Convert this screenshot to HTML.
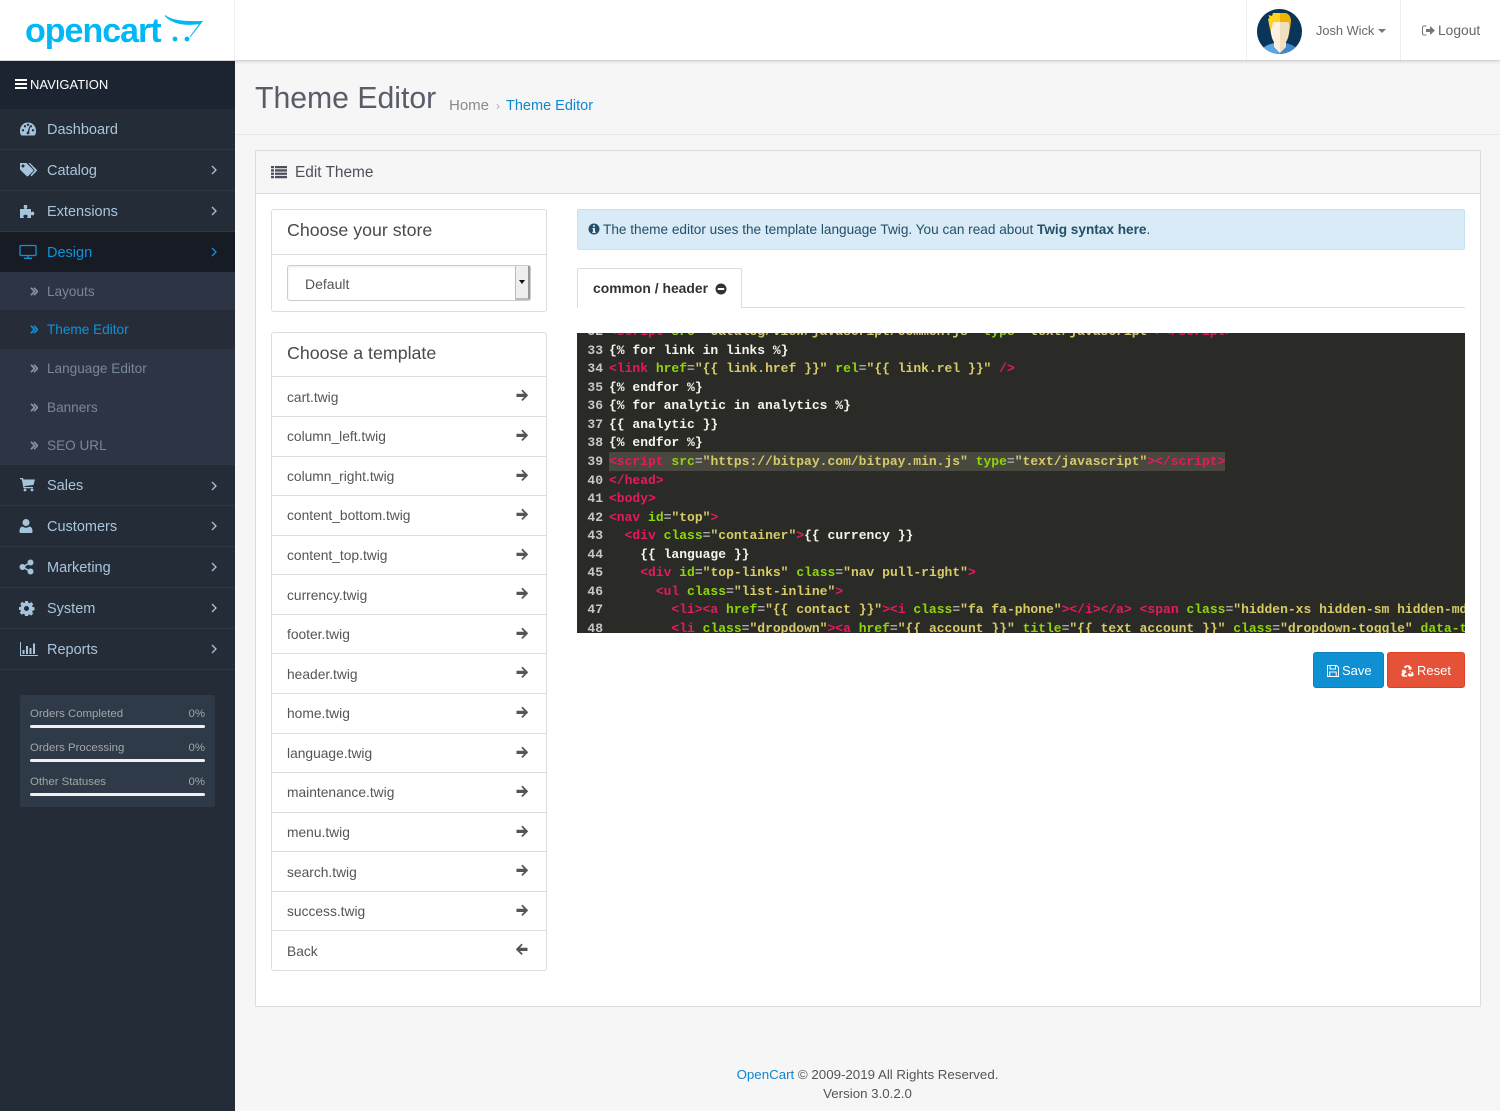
<!DOCTYPE html>
<html lang="en"><head><meta charset="utf-8"><title>Theme Editor</title>
<style>
*{box-sizing:border-box}
html,body{margin:0;padding:0;width:1500px;height:1111px;overflow:hidden;background:#f6f6f6;font-family:"Liberation Sans",sans-serif;color:#555}
a{text-decoration:none;color:inherit}
.abs,header,nav,nav *,.sp{position:absolute}
header{left:0;top:0;width:1500px;height:61px;background:#fff;border-bottom:1px solid #d4d4d4;box-shadow:0 1px 3px rgba(0,0,0,.12);z-index:3}
.vl{position:absolute;top:0;width:1px;height:60px;background:#eee}
.logo{position:absolute;left:25px;top:9px;font:bold 34px/44px "Liberation Sans",sans-serif;letter-spacing:-1px;color:#00b8f5}
nav{left:0;top:61px;width:235px;height:1050px;background:#242c37}
.navh{left:0;top:0;width:235px;height:48px;background:#1b2430;color:#fff;font-size:13px;line-height:47px;padding-left:30px}
.it{left:0;width:235px;height:41px;border-bottom:1px solid #2e3743;color:#a9c5dc;font-size:14.5px;line-height:43px;padding-left:47px}
.it svg{left:19px;top:12px;fill:#a5c4dc}
.it .ch{left:211px;top:15px;fill:none;stroke:#a5c4dc;stroke-width:1.3}
.it.on{background:#171b24;color:#0f93dc;border-color:#171b24}
.it.on svg{fill:none;stroke:#0f93dc}
.sub{left:0;width:235px;background:#2d3545;color:#78879a;font-size:13.6px;padding-left:47px}
.sub svg{left:30px;fill:none;stroke:#8a97a7;stroke-width:1.6}
.sub.act{background:#262d38;color:#0f93dc}
.sub.act svg{stroke:#0f93dc}
.stats{left:20px;top:634px;width:195px;height:112px;background:#2e3a47;border-radius:2px}
.lb{left:10px;font-size:11.4px;color:#a3a6a8;white-space:nowrap}
.pc{right:10px;font-size:11.4px;color:#a3a6a8}
.bar{left:10px;width:175px;height:3px;background:#f0f0f0;border-radius:2px}
h1{position:absolute;left:255px;top:79px;margin:0;font-size:30.2px;line-height:40px;font-weight:400;color:#5a5d69}
.bc{position:absolute;top:97px;font-size:14.5px;line-height:18px;white-space:nowrap}
.rule{position:absolute;left:235px;top:134px;width:1265px;height:1px;background:#e6e6e6}
.panel{position:absolute;left:255px;top:150px;width:1226px;height:857px;background:#fff;border:1px solid #ddd}
.ph{position:absolute;left:255px;top:150px;width:1226px;height:44px;background:#f6f6f6;border:1px solid #ddd;color:#4c4f5c;font-size:15.4px;line-height:43px;padding-left:39px}
.box{position:absolute;left:271px;width:276px;background:#fff;border:1px solid #ddd;border-radius:3px}
.t18{position:absolute;left:15px;font-size:17.8px;line-height:24px;color:#4a4a4a;white-space:nowrap}
.hr{position:absolute;left:0;width:100%;height:1px;background:#ddd}
.sel{position:absolute;left:287px;top:265px;width:244px;height:36px;border:1px solid #ccc;border-radius:3px;background:#fff;font-size:14px;line-height:37px;padding-left:17px;color:#555;box-shadow:inset 0 1px 2px rgba(0,0,0,.08)}
.sel i{position:absolute;right:0;top:0;width:15px;height:34px;background:#eee;border-left:1px solid #bbb;border-right:2px solid #999;border-bottom:2px solid #bbb}
.sel i:after{content:"";position:absolute;left:3px;top:14px;border:3px solid transparent;border-top:4px solid #111;border-bottom:0}
.row{position:absolute;left:271px;width:276px;height:40px;border-top:1px solid #ddd;font-size:13.8px;line-height:40px;padding-left:16px;color:#555}
.row.r1{line-height:42px}
.row svg{position:absolute;left:245px;top:12px;fill:#555}
.alert{position:absolute;left:577px;top:209px;width:888px;height:41px;background:#d8ebf6;border:1px solid #c3e3f1;border-radius:2px;font-size:13.62px;line-height:39px;padding-left:25px;color:#234f68;white-space:nowrap}
.alert svg{position:absolute;left:10px;top:13px;fill:#234f68}
.tabr{position:absolute;left:577px;top:307px;width:888px;height:1px;background:#ddd}
.tab{position:absolute;left:577px;top:268px;width:165px;height:40px;background:#fff;border:1px solid #ddd;border-bottom:0;border-radius:2px 2px 0 0;font-size:13.9px;font-weight:700;line-height:39px;padding-left:15px;color:#333}
.tab svg{position:absolute;left:137px;top:14px;fill:#333}
.code{position:absolute;left:577px;top:333px;width:888px;height:300px;background:#2a2b26;overflow:hidden;font:bold 13px/18.57px "Liberation Mono",monospace;color:#f4f4ee}
.lnw{position:absolute;left:0;top:-10px;width:26px;text-align:right;color:#c8c8c8;font-weight:700}
.cw{position:absolute;left:32px;top:-10px;width:1200px}
.lnw div,.cw div{height:18.57px}
.cw div{white-space:pre}
.selbg{position:absolute;left:32px;top:119px;width:616px;height:19px;background:#49483e}
.g{color:#e6195f}.a{color:#8fd60a}.s{color:#d8cb68}.e{color:#a8a8a8}
.btn{position:absolute;top:652px;height:36px;border-radius:3px;color:#fff;font-size:13px;font-weight:400;line-height:35px}
.btn svg{position:absolute;left:13px;top:12px}
.foot{position:absolute;left:235px;width:1265px;text-align:center;font-size:13.3px;line-height:19px;color:#555}
</style></head><body>
<header>
<div class="vl" style="left:234px"></div><div class="vl" style="left:1246px"></div><div class="vl" style="left:1400px"></div>
<a class="logo">opencart</a>
<svg class="abs" style="left:164px;top:14px" width="40" height="32" viewBox="0 0 40 32"><path d="M1 1.500C8 7 20 8 38 7.500L26 23l10-13.500C20 12 7 9 1 1.500Z" fill="#00b8f5" stroke="#00b8f5" stroke-width="1"/><circle cx="11" cy="25" r="2.400" fill="#00b8f5"/><circle cx="23" cy="25" r="2.400" fill="#00b8f5"/></svg>
<svg class="abs" style="left:1257px;top:9px" width="45" height="45" viewBox="0 0 45 45"><defs><clipPath id="c"><circle cx="22.500" cy="22.500" r="22.500"/></clipPath></defs><g clip-path="url(#c)"><rect width="45" height="45" fill="#0b3557"/><path d="M3 45C4 38 10 36 17 34L23 41V45Z" fill="#5aa7e8"/><path d="M23 45V41L29 34C36 36 41 38 42 45Z" fill="#3f86cc"/><path d="M13 11H23V44L17 38V33C14 29 13 20 13 11Z" fill="#fdf0dd"/><path d="M23 11H33C33 20 32 29 29 33V38L23 44Z" fill="#f2dfbe"/><path d="M13 20L11 10L12.500 9L11.500 6L15 7L16 4H23V13H16L14.500 20Z" fill="#ffd21f"/><path d="M23 4H29C32 5 34 8 34 12L33 20L31.500 13H23Z" fill="#eeb400"/></g></svg>
<span class="abs" style="left:1316px;top:22px;font-size:12.8px;line-height:18px;color:#666;white-space:nowrap">Josh Wick</span>
<span class="abs" style="left:1378px;top:29px;border:4px solid transparent;border-top-color:#777;border-bottom:0"></span>
<svg class="abs" style="left:1422px;top:25px" width="13" height="11" viewBox="0 0 13 11"><path d="M4.500 1H2a1.500 1.500 0 0 0-1.500 1.500v6A1.500 1.500 0 0 0 2 10h2.500" fill="none" stroke="#777" stroke-width="1"/><path d="M4 4h4V1l5 4.500L8 10V7H4Z" fill="#777"/></svg>
<span class="abs" style="left:1438px;top:22px;font-size:13.800px;line-height:18px;color:#666">Logout</span>
</header>
<nav>
<div class="navh"><svg class="abs" style="left:15px;top:18px" width="12" height="11" viewBox="0 0 12 11" fill="#fff"><rect width="12" height="2"/><rect y="4" width="12" height="2"/><rect y="8" width="12" height="2"/></svg>NAVIGATION</div>
<a class="it" style="top:48px"><svg width="18" height="16" viewBox="0 0 18 16"><path fill-rule="evenodd" d="M9 1.500C4 1.500 1 5.500 1 10c0 1.500.3 3 1 4 .2.300.5.500 1 .500h12c.5 0 .8-.2 1-.5.7-1 1-2.500 1-4 0-4.500-3-8.500-8-8.500ZM4 10.500a1.200 1.200 0 1 1 0-2.400 1.200 1.200 0 0 1 0 2.400Zm2-4a1.200 1.200 0 1 1 0-2.400 1.200 1.200 0 0 1 0 2.400Zm3-1.500a1.200 1.200 0 1 1 0-2.400 1.200 1.200 0 0 1 0 2.400Zm1.500 7.500a1.700 1.700 0 0 1-3 0c0-.8.500-1.400 1-1.600L10.500 5l.8.300-1.200 5.800c.3.300.4.800.4 1.400ZM12 6.500a1.200 1.200 0 1 1 0-2.400 1.200 1.200 0 0 1 0 2.400Zm2 4a1.200 1.200 0 1 1 0-2.400 1.200 1.200 0 0 1 0 2.400Z"/></svg>Dashboard</a>
<a class="it" style="top:89px"><svg width="18" height="16" viewBox="0 0 18 16"><path fill-rule="evenodd" d="M1 1h6.500L14 7.500a1.200 1.200 0 0 1 0 1.700L9.200 14a1.200 1.200 0 0 1-1.700 0L1 7.500ZM4 5.500a1.500 1.500 0 1 0 0-3 1.500 1.500 0 0 0 0 3Z"/><path d="M9.500 1h1.500L17.500 7.500a1.200 1.200 0 0 1 0 1.700L12.500 14.300l-1-1L15.700 8.400Z"/></svg>Catalog<svg class="ch" width="6" height="10" viewBox="0 0 6 10"><path d="M1 1l4 4-4 4"/></svg></a>
<a class="it" style="top:130px"><svg width="18" height="16" viewBox="0 0 18 16"><path d="M1 6h4.500C5 4.500 4.500 4 4.700 3 5 1.500 8 1.500 8.300 3c.2 1-.3 1.500-.8 3H12v3.300c1.200-.8 1.800-.8 2.500-.5 1 .5 1 2.900 0 3.400-.7.300-1.300.3-2.500-.5V15H8c.3-1 1-1.700.5-2.500-.5-1-3.500-1-4 0-.4.800.2 1.500.5 2.500H1Z"/></svg>Extensions<svg class="ch" width="6" height="10" viewBox="0 0 6 10"><path d="M1 1l4 4-4 4"/></svg></a>
<a class="it on" style="top:171px;height:40px"><svg width="18" height="16" viewBox="0 0 18 16" stroke-width="1.300"><rect x="1" y="1.500" width="16" height="10" rx="1"/><path d="M9 11.500v2.500M5 14.300h8"/></svg>Design<svg class="ch" style="stroke:#0f93dc;stroke-width:1.300" width="6" height="10" viewBox="0 0 6 10"><path d="M1 1l4 4-4 4"/></svg></a>
<a class="sub" style="top:211px;height:38px;line-height:40px"><svg style="top:15px" width="8" height="9" viewBox="0 0 8 9"><path d="M1 .8l3.500 3.700L1 8.200M4 .8l3.500 3.700L4 8.200"/></svg>Layouts</a>
<a class="sub act" style="top:249px;height:39px;line-height:39px"><svg style="top:15px" width="8" height="9" viewBox="0 0 8 9"><path d="M1 .8l3.500 3.700L1 8.200M4 .8l3.500 3.700L4 8.200"/></svg>Theme Editor</a>
<a class="sub" style="top:288px;height:39px;line-height:40px"><svg style="top:15px" width="8" height="9" viewBox="0 0 8 9"><path d="M1 .8l3.500 3.700L1 8.200M4 .8l3.500 3.700L4 8.200"/></svg>Language Editor</a>
<a class="sub" style="top:327px;height:38px;line-height:40px"><svg style="top:15px" width="8" height="9" viewBox="0 0 8 9"><path d="M1 .8l3.500 3.700L1 8.200M4 .8l3.500 3.700L4 8.200"/></svg>Banners</a>
<a class="sub" style="top:365px;height:38px;line-height:40px"><svg style="top:15px" width="8" height="9" viewBox="0 0 8 9"><path d="M1 .8l3.500 3.700L1 8.200M4 .8l3.500 3.700L4 8.200"/></svg>SEO URL</a>
<a class="it" style="top:403px;height:42px;border-top:1px solid #2e3743"><svg style="top:11px" width="18" height="16" viewBox="0 0 18 16"><path d="M1 2h3l.5 1.500H16L14.500 9 5.500 10l.2 1H14v1.300H4.500L2.800 3.300H1Z"/><circle cx="6" cy="14" r="1.400"/><circle cx="13" cy="14" r="1.400"/></svg>Sales<svg class="ch" style="top:16px" width="6" height="10" viewBox="0 0 6 10"><path d="M1 1l4 4-4 4"/></svg></a>
<a class="it" style="top:445px"><svg width="18" height="16" viewBox="0 0 18 16"><circle cx="7" cy="4.500" r="3.500"/><path d="M1.500 15c-.5 0-1-.5-1-1.200 0-2.500.6-5 3-5.300 1 .8 2.100 1.200 3.500 1.200s2.500-.4 3.500-1.200c2.400.3 3 2.800 3 5.300 0 .7-.5 1.200-1 1.200Z"/></svg>Customers<svg class="ch" width="6" height="10" viewBox="0 0 6 10"><path d="M1 1l4 4-4 4"/></svg></a>
<a class="it" style="top:486px"><svg width="18" height="16" viewBox="0 0 18 16"><circle cx="3.500" cy="8" r="3"/><circle cx="11.500" cy="3.500" r="3"/><circle cx="11.500" cy="12.500" r="3"/><path d="M3.500 8l8-4.500M3.500 8l8 4.500" stroke="#a5c4dc" stroke-width="1.500"/></svg>Marketing<svg class="ch" width="6" height="10" viewBox="0 0 6 10"><path d="M1 1l4 4-4 4"/></svg></a>
<a class="it" style="top:527px"><svg width="18" height="16" viewBox="0 0 18 16"><path fill-rule="evenodd" d="M6 1h3l.4 1.900 1.200.5L12.300 2l2 2.200-1.200 1.600.5 1.200 1.900.3v3l-1.900.4-.5 1.100 1.100 1.700-2 2.100-1.700-1.200-1.100.5L9 16H6l-.4-1.800-1.100-.5-1.700 1.100-2-2.100 1.100-1.700-.5-1.100L0 10V7l1.900-.3.500-1.200L1.200 4l2-2.200L4.900 3l1.200-.4ZM7.500 11a2.500 2.500 0 1 0 0-5 2.500 2.500 0 0 0 0 5Z"/></svg>System<svg class="ch" width="6" height="10" viewBox="0 0 6 10"><path d="M1 1l4 4-4 4"/></svg></a>
<a class="it" style="top:568px"><svg style="width:19px" width="19" height="16" viewBox="0 0 19 16"><path d="M1 1h1v13h17v1H1Z"/><rect x="3.500" y="9" width="2" height="4"/><rect x="7" y="5" width="2" height="8"/><rect x="10.500" y="7" width="2" height="6"/><rect x="14" y="2.500" width="2" height="10.500"/></svg>Reports<svg class="ch" width="6" height="10" viewBox="0 0 6 10"><path d="M1 1l4 4-4 4"/></svg></a>
<div class="stats">
<span class="lb" style="top:11px;margin-top:1px;line-height:15px">Orders Completed</span><span class="pc" style="top:12px;line-height:15px">0%</span><div class="bar" style="top:30px"></div>
<span class="lb" style="top:46px;line-height:15px">Orders Processing</span><span class="pc" style="top:46px;line-height:15px">0%</span><div class="bar" style="top:64px"></div>
<span class="lb" style="top:80px;line-height:15px">Other Statuses</span><span class="pc" style="top:80px;line-height:15px">0%</span><div class="bar" style="top:98px"></div>
</div>
</nav>
<h1>Theme Editor</h1>
<span class="bc" style="left:449px;color:#8a8a8a;font-size:15px">Home</span><span class="bc" style="left:496px;color:#aaa;font-size:12px">›</span><span class="bc" style="left:506px;color:#0f86ce">Theme Editor</span>
<div class="rule"></div>
<div class="panel"></div>
<div class="ph"><svg class="abs" style="left:15px;top:15px" width="16" height="13" viewBox="0 0 16 13" fill="#4c4f5c"><path d="M0 0h3v2.300H0ZM4 0h12v2.300H4ZM0 3.300h3v2.300H0ZM4 3.300h12v2.300H4ZM0 6.600h3v2.300H0ZM4 6.600h12v2.300H4ZM0 9.900h3v2.300H0ZM4 9.900h12v2.300H4Z"/></svg>Edit Theme</div>
<div class="box" style="top:209px;height:103px"><span class="t18" style="top:8px">Choose your store</span><div class="hr" style="top:44px"></div></div>
<div class="sel">Default<i></i></div>
<div class="box" style="top:332px;height:639px"><span class="t18" style="top:8px">Choose a template</span></div>
<a class="row r1" style="top:376px">cart.twig<svg width="12" height="12" viewBox="0 0 12 12"><path d="M6.500.6 11.700 5.800a.8.800 0 0 1 0 1.100L6.500 12 5.300 10.800 8 8H.5V4.800H8L5.300 1.800Z"/></svg></a>
<a class="row" style="top:416px">column_left.twig<svg width="12" height="12" viewBox="0 0 12 12"><path d="M6.500.6 11.700 5.800a.8.800 0 0 1 0 1.100L6.500 12 5.300 10.800 8 8H.5V4.800H8L5.300 1.800Z"/></svg></a>
<a class="row" style="top:456px;height:39px">column_right.twig<svg width="12" height="12" viewBox="0 0 12 12"><path d="M6.500.6 11.700 5.800a.8.800 0 0 1 0 1.100L6.500 12 5.300 10.800 8 8H.5V4.800H8L5.300 1.800Z"/></svg></a>
<a class="row" style="top:495px">content_bottom.twig<svg width="12" height="12" viewBox="0 0 12 12"><path d="M6.500.6 11.700 5.800a.8.800 0 0 1 0 1.100L6.500 12 5.300 10.800 8 8H.5V4.800H8L5.300 1.800Z"/></svg></a>
<a class="row" style="top:535px;height:39px">content_top.twig<svg width="12" height="12" viewBox="0 0 12 12"><path d="M6.500.6 11.700 5.800a.8.800 0 0 1 0 1.100L6.500 12 5.300 10.800 8 8H.5V4.800H8L5.300 1.800Z"/></svg></a>
<a class="row r1" style="top:574px">currency.twig<svg width="12" height="12" viewBox="0 0 12 12"><path d="M6.500.6 11.700 5.800a.8.800 0 0 1 0 1.100L6.500 12 5.300 10.800 8 8H.5V4.800H8L5.300 1.800Z"/></svg></a>
<a class="row" style="top:614px;height:39px">footer.twig<svg width="12" height="12" viewBox="0 0 12 12"><path d="M6.500.6 11.700 5.800a.8.800 0 0 1 0 1.100L6.500 12 5.300 10.800 8 8H.5V4.800H8L5.300 1.800Z"/></svg></a>
<a class="row r1" style="top:653px">header.twig<svg width="12" height="12" viewBox="0 0 12 12"><path d="M6.500.6 11.700 5.800a.8.800 0 0 1 0 1.100L6.500 12 5.300 10.800 8 8H.5V4.800H8L5.300 1.800Z"/></svg></a>
<a class="row" style="top:693px">home.twig<svg width="12" height="12" viewBox="0 0 12 12"><path d="M6.500.6 11.700 5.800a.8.800 0 0 1 0 1.100L6.500 12 5.300 10.800 8 8H.5V4.800H8L5.300 1.800Z"/></svg></a>
<a class="row" style="top:733px;height:39px">language.twig<svg width="12" height="12" viewBox="0 0 12 12"><path d="M6.500.6 11.700 5.800a.8.800 0 0 1 0 1.100L6.500 12 5.300 10.800 8 8H.5V4.800H8L5.300 1.800Z"/></svg></a>
<a class="row" style="top:772px">maintenance.twig<svg width="12" height="12" viewBox="0 0 12 12"><path d="M6.500.6 11.700 5.800a.8.800 0 0 1 0 1.100L6.500 12 5.300 10.800 8 8H.5V4.800H8L5.300 1.800Z"/></svg></a>
<a class="row" style="top:812px;height:39px">menu.twig<svg width="12" height="12" viewBox="0 0 12 12"><path d="M6.500.6 11.700 5.800a.8.800 0 0 1 0 1.100L6.500 12 5.300 10.800 8 8H.5V4.800H8L5.300 1.800Z"/></svg></a>
<a class="row r1" style="top:851px">search.twig<svg width="12" height="12" viewBox="0 0 12 12"><path d="M6.500.6 11.700 5.800a.8.800 0 0 1 0 1.100L6.500 12 5.300 10.800 8 8H.5V4.800H8L5.300 1.800Z"/></svg></a>
<a class="row" style="top:891px;height:39px">success.twig<svg width="12" height="12" viewBox="0 0 12 12"><path d="M6.500.6 11.700 5.800a.8.800 0 0 1 0 1.100L6.500 12 5.300 10.800 8 8H.5V4.800H8L5.300 1.800Z"/></svg></a>
<a class="row r1" style="top:930px">Back<svg width="12" height="12" viewBox="0 0 12 12"><path d="M5.500.6.300 5.800a.8.800 0 0 0 0 1.100L5.500 12l1.200-1.200L4 8h7.500V4.800H4l2.700-3Z"/></svg></a>
<div class="alert"><svg width="12" height="12" viewBox="0 0 12 12"><path fill-rule="evenodd" d="M6 .5a5.500 5.500 0 1 0 0 11 5.500 5.500 0 0 0 0-11ZM5 2.200h2v1.600H5ZM4.500 5h2.500v3.800h.7v1.200H4.300V8.800H5V6.200h-.5Z"/></svg>The theme editor uses the template language Twig. You can read about <b>Twig syntax here</b>.</div>
<div class="tabr"></div>
<div class="tab">common / header<svg width="12" height="12" viewBox="0 0 12 12"><path fill-rule="evenodd" d="M6 .5a5.500 5.500 0 1 0 0 11 5.500 5.500 0 0 0 0-11ZM2.800 5h6.400v2H2.800Z"/></svg></div>
<div class="code">
<div class="selbg"></div>
<div class="lnw"><div>32</div><div>33</div><div>34</div><div>35</div><div>36</div><div>37</div><div>38</div><div>39</div><div>40</div><div>41</div><div>42</div><div>43</div><div>44</div><div>45</div><div>46</div><div>47</div><div>48</div></div>
<div class="cw">
<div><span class="g">&lt;script</span> <span class="a">src</span><span class="e">=</span><span class="s">"catalog/view/javascript/common.js"</span> <span class="a">type</span><span class="e">=</span><span class="s">"text/javascript"</span><span class="g">&gt;&lt;/script&gt;</span></div>
<div>{% for link in links %}</div>
<div><span class="g">&lt;link</span> <span class="a">href</span><span class="e">=</span><span class="s">"{{ link.href }}"</span> <span class="a">rel</span><span class="e">=</span><span class="s">"{{ link.rel }}"</span> <span class="g">/&gt;</span></div>
<div>{% endfor %}</div>
<div>{% for analytic in analytics %}</div>
<div>{{ analytic }}</div>
<div>{% endfor %}</div>
<div><span class="g">&lt;script</span> <span class="a">src</span><span class="e">=</span><span class="s">"https://bitpay.com/bitpay.min.js"</span> <span class="a">type</span><span class="e">=</span><span class="s">"text/javascript"</span><span class="g">&gt;&lt;/script&gt;</span></div>
<div><span class="g">&lt;/head&gt;</span></div>
<div><span class="g">&lt;body&gt;</span></div>
<div><span class="g">&lt;nav</span> <span class="a">id</span><span class="e">=</span><span class="s">"top"</span><span class="g">&gt;</span></div>
<div>  <span class="g">&lt;div</span> <span class="a">class</span><span class="e">=</span><span class="s">"container"</span><span class="g">&gt;</span>{{ currency }}</div>
<div>    {{ language }}</div>
<div>    <span class="g">&lt;div</span> <span class="a">id</span><span class="e">=</span><span class="s">"top-links"</span> <span class="a">class</span><span class="e">=</span><span class="s">"nav pull-right"</span><span class="g">&gt;</span></div>
<div>      <span class="g">&lt;ul</span> <span class="a">class</span><span class="e">=</span><span class="s">"list-inline"</span><span class="g">&gt;</span></div>
<div>        <span class="g">&lt;li&gt;&lt;a</span> <span class="a">href</span><span class="e">=</span><span class="s">"{{ contact }}"</span><span class="g">&gt;&lt;i</span> <span class="a">class</span><span class="e">=</span><span class="s">"fa fa-phone"</span><span class="g">&gt;&lt;/i&gt;&lt;/a&gt;</span> <span class="g">&lt;span</span> <span class="a">class</span><span class="e">=</span><span class="s">"hidden-xs hidden-sm hidden-md"</span><span class="g">&gt;</span></div>
<div>        <span class="g">&lt;li</span> <span class="a">class</span><span class="e">=</span><span class="s">"dropdown"</span><span class="g">&gt;&lt;a</span> <span class="a">href</span><span class="e">=</span><span class="s">"{{ account }}"</span> <span class="a">title</span><span class="e">=</span><span class="s">"{{ text_account }}"</span> <span class="a">class</span><span class="e">=</span><span class="s">"dropdown-toggle"</span> <span class="a">data-toggle</span><span class="e">=</span><span class="s">"dropdown"</span><span class="g">&gt;</span></div>
</div>
</div>
<a class="btn" style="left:1313px;width:71px;background:#0f90d3;border:1px solid #0c80bd;padding-left:28px"><svg width="12" height="12" viewBox="0 0 12 12" fill="none" stroke="#fff" stroke-width="1"><path d="M.5.500h9l2 2v9H.5Z"/><path d="M3 .5v3.500h5.500V.5M2.800 11.500V7h6.400v4.500"/></svg>Save</a>
<a class="btn" style="left:1387px;width:78px;background:#e65238;border:1px solid #e03f22;padding-left:29px"><svg width="13" height="12" viewBox="0 0 13 12" fill="#fff"><path d="M4 .8C5 0 8 0 9 .8l1 1.700 1-.5-1 3-3-.6 1-.6-1-1.700C6.500 1.500 6 1.500 5.500 2.300L4.800 3.500 2.800 2.300ZM1.800 4.500l3 .8.600 3-1-.6L3.400 9.300c-.3.700 0 1 .7 1h2v1.500H3c-1.500 0-2.800-1-2.500-2.500.2-.7.700-1.500 1-2l-1-.6ZM8 6.200l2.600 1.500-.6-.4 1.500-.6 1 2c.5 1.300-.5 2.800-2 2.700H8.500V12L6.500 9.800l2-2.300v1.300h1.500c.7 0 1-.5.700-1.100l-.9-1.500Z"/></svg>Reset</a>
<div class="foot" style="top:1065px"><a style="color:#0f86ce">OpenCart</a> © 2009-2019 All Rights Reserved.</div>
<div class="foot" style="top:1084px">Version 3.0.2.0</div>
</body></html>
